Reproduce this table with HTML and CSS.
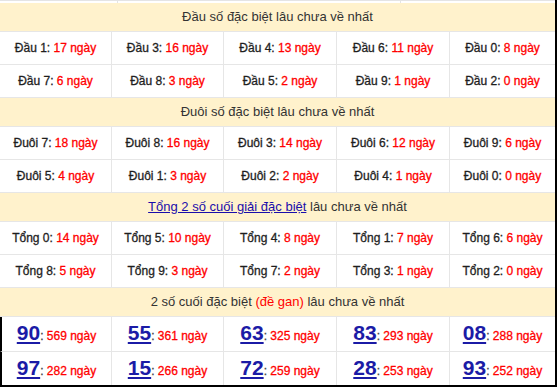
FILE: index.html
```html
<!DOCTYPE html>
<html lang="vi">
<head>
<meta charset="utf-8">
<link rel="stylesheet" href="styles.css">
</head>
<body>
<div class="wrap">
  <div class="prev"><span class="l1"></span><span class="l2"></span></div>

  <div class="head">Đầu số đặc biệt lâu chưa về nhất</div>
  <div class="grid">
    <div class="cell">Đầu 1: <b>17 ngày</b></div>
    <div class="cell">Đầu 3: <b>16 ngày</b></div>
    <div class="cell">Đầu 4: <b>13 ngày</b></div>
    <div class="cell">Đầu 6: <b>11 ngày</b></div>
    <div class="cell">Đầu 0: <b>8 ngày</b></div>
    <div class="cell">Đầu 7: <b>6 ngày</b></div>
    <div class="cell">Đầu 8: <b>3 ngày</b></div>
    <div class="cell">Đầu 5: <b>2 ngày</b></div>
    <div class="cell">Đầu 9: <b>1 ngày</b></div>
    <div class="cell">Đầu 2: <b>0 ngày</b></div>
  </div>

  <div class="head">Đuôi số đặc biệt lâu chưa về nhất</div>
  <div class="grid">
    <div class="cell">Đuôi 7: <b>18 ngày</b></div>
    <div class="cell">Đuôi 8: <b>16 ngày</b></div>
    <div class="cell">Đuôi 3: <b>14 ngày</b></div>
    <div class="cell">Đuôi 6: <b>12 ngày</b></div>
    <div class="cell">Đuôi 9: <b>6 ngày</b></div>
    <div class="cell">Đuôi 5: <b>4 ngày</b></div>
    <div class="cell">Đuôi 1: <b>3 ngày</b></div>
    <div class="cell">Đuôi 2: <b>2 ngày</b></div>
    <div class="cell">Đuôi 4: <b>1 ngày</b></div>
    <div class="cell">Đuôi 0: <b>0 ngày</b></div>
  </div>

  <div class="head"><a href="#">Tổng 2 số cuối giải đặc biệt</a> lâu chưa về nhất</div>
  <div class="grid">
    <div class="cell">Tổng 0: <b>14 ngày</b></div>
    <div class="cell">Tổng 5: <b>10 ngày</b></div>
    <div class="cell">Tổng 4: <b>8 ngày</b></div>
    <div class="cell">Tổng 1: <b>7 ngày</b></div>
    <div class="cell">Tổng 6: <b>6 ngày</b></div>
    <div class="cell">Tổng 8: <b>5 ngày</b></div>
    <div class="cell">Tổng 9: <b>3 ngày</b></div>
    <div class="cell">Tổng 7: <b>2 ngày</b></div>
    <div class="cell">Tổng 3: <b>1 ngày</b></div>
    <div class="cell">Tổng 2: <b>0 ngày</b></div>
  </div>

  <div class="head">2 số cuối đặc biệt <span class="red">(đề gan)</span> lâu chưa về nhất</div>
  <div class="grid big">
    <div class="cell"><a href="#">90</a>: <b>569 ngày</b></div>
    <div class="cell"><a href="#">55</a>: <b>361 ngày</b></div>
    <div class="cell"><a href="#">63</a>: <b>325 ngày</b></div>
    <div class="cell"><a href="#">83</a>: <b>293 ngày</b></div>
    <div class="cell"><a href="#">08</a>: <b>288 ngày</b></div>
    <div class="cell"><a href="#">97</a>: <b>282 ngày</b></div>
    <div class="cell"><a href="#">15</a>: <b>266 ngày</b></div>
    <div class="cell"><a href="#">72</a>: <b>259 ngày</b></div>
    <div class="cell"><a href="#">28</a>: <b>253 ngày</b></div>
    <div class="cell"><a href="#">93</a>: <b>252 ngày</b></div>
  </div>
</div>
</body>
</html>
```
FILE: styles.css
```css
html, body {
  margin: 0;
  padding: 0;
  background: #fff;
}
.wrap {
  width: 557px;
  height: 387px;
  overflow: hidden;
  box-sizing: border-box;
  border-right: 2px solid #000;
  border-bottom: 2px solid #000;
  font-family: "Liberation Sans", Arial, sans-serif;
}
.prev {
  height: 3px;
  box-sizing: border-box;
  border-top: 1px solid #e4e4e4;
  position: relative;
}
.prev span {
  position: absolute;
  top: 0;
  width: 1px;
  height: 2px;
  background: #e4e4e4;
}
.prev .l1 { left: 117px; }
.prev .l2 { left: 400px; }

.head {
  height: 29px;
  box-sizing: border-box;
  background: #fff2cc;
  border-bottom: 1px solid #e6e6e6;
  line-height: 28px;
  text-align: center;
  font-size: 13px;
  color: #333;
  white-space: nowrap;
}
.head a {
  color: #1a0dab;
  text-decoration: underline;
}
.red { color: #f00; }

.grid {
  display: grid;
  grid-template-columns: 112px 112px 113px 113px 105px;
  grid-auto-rows: 33px;
}
.cell {
  box-sizing: border-box;
  border-right: 1px solid #e6e6e6;
  border-bottom: 1px solid #e6e6e6;
  line-height: 32px;
  text-align: center;
  white-space: nowrap;
  font-size: 12px;
  color: #1e1e1e;
  -webkit-text-stroke: 0.3px currentColor;
}
.cell:nth-child(5n) { border-right: none; }
.cell b {
  font-weight: normal;
  color: #f00;
}

.grid.big {
  grid-template-rows: 35px 33px;
}
.grid.big .cell {
  color: #444;
  line-height: 32px;
}
.grid.big .cell:nth-child(5n+1) {
  border-left: 2px solid #000;
}
.grid.big .cell:nth-child(n+6) {
  border-bottom: none;
}
.grid.big .cell a {
  color: #1b1ba6;
  font-size: 21px;
  font-weight: bold;
  -webkit-text-stroke: 0;
  text-decoration: underline;
  text-underline-offset: 2px;
}
```
